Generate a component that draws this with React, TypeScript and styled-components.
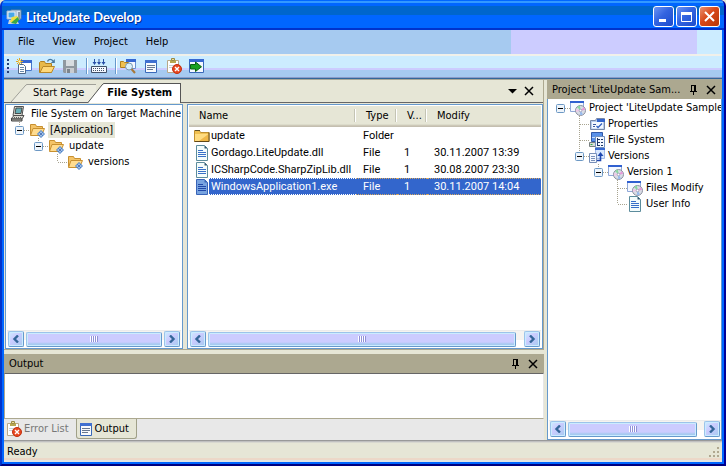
import React from "react";
import styled, { createGlobalStyle, css } from "styled-components";

const ui = `"DejaVu Sans Condensed", "Noto Sans", sans-serif`;
const listFont = `Roboto, "Liberation Sans", sans-serif`;
const beige = "#e6e6d6";
const khaki = "#aca890";
const sky = "#a6caf0";
const pale = "#ccecff";
const lilac = "#ccccff";

const GlobalStyle = createGlobalStyle`
  * { box-sizing: border-box; }
  body { margin: 0; background: ${beige}; color: #000; font: 11px/16px ${ui}; }
  button { font: inherit; color: inherit; background: none; border: 0; padding: 0; margin: 0; }
  svg { display: block; flex: none; }
`;

/* ---------- window frame ---------- */

const Frame = styled.div`
  display: flex;
  flex-direction: column;
  height: 100vh;
  background: #06f;
  border: solid;
  border-width: 0 2px 2px;
  border-color: #0033cc #000099 #000080 #0033cc;
  border-radius: 6px 6px 0 0;
  overflow: hidden;
`;

const TitleBar = styled.header`
  display: flex;
  align-items: center;
  flex: none;
  height: 30px;
  padding: 3px 4px 0 4px;
  gap: 4px;
  background: linear-gradient(
    #06f 0 1px, #39f 1px 3px, #06f 3px 6px, #06c 6px 15px, #06f 15px 28px, #03c 28px 30px
  );
`;

const WindowTitle = styled.h1`
  flex: 1;
  margin: 0;
  color: #fff;
  font: bold 13px/20px Lato, "Open Sans", sans-serif;
  text-shadow: 1px 1px 0 #003090;
`;

const CaptionButtons = styled.div`
  display: flex;
  gap: 2px;
`;

const CaptionButton = styled.button<{ $danger?: boolean }>`
  display: grid;
  place-items: center;
  width: 21px;
  height: 21px;
  border: 1px solid #fff;
  border-radius: 3px;
  background: ${(p) =>
    p.$danger
      ? "linear-gradient(135deg, #e89070, #d84818 45%, #b83808)"
      : "linear-gradient(135deg, #6c94f4, #3364e0 45%, #1c4ccc)"};
`;

const Client = styled.div`
  display: flex;
  flex-direction: column;
  flex: 1;
  min-height: 0;
  margin: 0 2px 2px;
  background: ${beige};
`;

/* ---------- menu and toolbar ---------- */

const MenuBar = styled.nav`
  display: flex;
  align-items: center;
  flex: none;
  height: 24px;
  padding-left: 14px;
  gap: 18px;
  background: linear-gradient(
    to left, ${pale} 0 25px, ${lilac} 25px 211px, ${sky} 211px
  );
`;

const ToolBar = styled.div`
  display: flex;
  align-items: center;
  flex: none;
  height: 26px;
  padding: 0 3px 2px;
  gap: 7px;
  background: linear-gradient(
    #f0f0ea 0 2px, ${pale} 2px 14px, ${lilac} 14px 16px, ${sky} 16px 23px,
    #8c9cc8 23px 24px, #336699 24px 25px, #a8a898 25px
  );
`;

const ToolButton = styled.button`
  display: grid;
  place-items: center;
  width: 16px;
  height: 16px;
`;

const Grip = styled.span`
  width: 2px;
  height: 14px;
  background: repeating-linear-gradient(#223c78 0 2px, transparent 2px 4px);
`;

const Separator = styled.span`
  width: 2px;
  height: 16px;
  margin-left: 1px;
  margin-right: -4px;
  border-left: 1px solid #6699cc;
  border-right: 1px solid #fff;
`;

/* ---------- docking layout ---------- */

const Workspace = styled.main`
  display: grid;
  grid-template-columns: minmax(0, 1fr) 175px;
  column-gap: 3px;
  flex: 1;
  min-height: 0;
`;

const LeftColumn = styled.div`
  display: flex;
  flex-direction: column;
  min-height: 0;
`;

const DocumentWell = styled.section`
  display: flex;
  flex-direction: column;
  flex: 1;
  min-height: 0;
  border-right: 1px solid ${khaki};
  border-bottom: 1px solid ${khaki};
`;

const TabBar = styled.div`
  display: flex;
  align-items: flex-end;
  flex: none;
  height: 23px;
  padding: 0 9px 0 7px;
  border-bottom: 1px solid #666;
`;

const TabActions = styled.div`
  display: flex;
  align-items: center;
  align-self: center;
  gap: 7px;
  margin-left: auto;
`;

const DocTab = styled.button<{ $active?: boolean }>`
  display: flex;
  position: relative;
  height: ${(p) => (p.$active ? 20 : 18)}px;
  margin-bottom: ${(p) => (p.$active ? -1 : 0)}px;
  margin-left: ${(p) => (p.$active ? -8 : 0)}px;
  font-weight: ${(p) => (p.$active ? "bold" : "normal")};
`;

const DocTabLabel = styled.span<{ $active?: boolean }>`
  height: 100%;
  padding: ${(p) => (p.$active ? "1px 8px 0 3px" : "0 12px 0 6px")};
  background: ${(p) => (p.$active ? "#fff" : "#ecece0")};
  border-top: 1px solid ${(p) => (p.$active ? "#555" : "#a0a098")};
  border-right: ${(p) => (p.$active ? "1px solid #555" : "0")};
`;

const Panes = styled.div`
  display: flex;
  flex: 1;
  min-height: 0;
  gap: 4px;
  padding: 1px 0 0 1px;
`;

const Pane = styled.div<{ $fixed?: boolean }>`
  display: flex;
  flex-direction: column;
  flex: ${(p) => (p.$fixed ? "0 0 178px" : "1")};
  min-width: 0;
  padding: 1px 1px 0;
  background: #fff;
  border: 1px solid #6699cc;
`;

const Scroller = styled.div`
  flex: 1;
  min-height: 0;
  overflow: hidden;
`;

/* ---------- tree ---------- */

const TreeList = styled.ul<{ $inset: number }>`
  margin: 0;
  padding: 0 0 0 ${(p) => p.$inset}px;
  list-style: none;
`;

const TreeRow = styled.li`
  display: flex;
  height: 16px;
  white-space: nowrap;
`;

const GuideCell = styled.span`
  display: block;
  flex: none;
  width: 19px;
  height: 16px;
`;

const TreeLabel = styled.span<{ $selected?: boolean; $gap: number }>`
  margin-left: ${(p) => p.$gap}px;
  padding-left: 2px;
  padding-right: ${(p) => (p.$selected ? 2 : 0)}px;
  line-height: 16px;
  background: ${(p) => (p.$selected ? beige : "transparent")};
`;

/* ---------- file list ---------- */

const FileTable = styled.table`
  width: 100%;
  table-layout: fixed;
  border-collapse: separate;
  border-spacing: 0;
  font: 11px/17px ${listFont};
`;

const Col = styled.col<{ $w?: number }>`
  width: ${(p) => (p.$w ? `${p.$w}px` : "auto")};
`;

const HeadCell = styled.th`
  height: 21px;
  padding: 0 0 2px 10px;
  font-weight: normal;
  font-family: ${ui};
  text-align: left;
  background:
    linear-gradient(#c4c4b4, #c4c4b4) right 1px top 3px / 1px 13px no-repeat,
    linear-gradient(#fff, #fff) right 0 top 3px / 1px 13px no-repeat,
    linear-gradient(${beige} 0 18px, #dcdccb 18px 19px, #cdc8b8 19px 20px, #c4bfb0 20px);
  &:last-child {
    background: linear-gradient(${beige} 0 18px, #dcdccb 18px 19px, #cdc8b8 19px 20px, #c4bfb0 20px);
  }
`;

const FileRow = styled.tr<{ $selected?: boolean }>`
  ${(p) =>
    p.$selected &&
    css`
      color: #fff;
      td { background: #3366cc; border-top: 1px dotted #d8a860; border-bottom: 1px dotted #d8a860; line-height: 15px; }
      td:first-child { background: linear-gradient(to right, #fff 20px, #3366cc 20px); border-color: #fff; }
    `}
`;

const FileCell = styled.td`
  height: 17px;
  padding: 0 0 0 7px;
  white-space: nowrap;
`;

const NameBox = styled.span`
  display: flex;
  align-items: center;
  gap: 1px;
  height: 15px;
  margin-left: -2px;
`;

/* ---------- scroll bar ---------- */

const ScrollTrack = styled.div`
  display: flex;
  align-items: center;
  flex: none;
  height: 18px;
  padding: 0 1px;
  gap: 2px;
  background: linear-gradient(#ececec 0 1px, #f6f4f0 1px 10px, #fff 10px);
`;

const bluish = css`
  border: 1px solid #9cc4ea;
  border-right-color: #6699cc;
  border-bottom-color: #6699cc;
  border-radius: 2px;
  box-shadow: inset 0 0 0 1px ${pale};
  background: linear-gradient(135deg, ${pale}, ${lilac} 40%, ${sky});
`;

const ScrollButton = styled.button`
  ${bluish}
  display: grid;
  place-items: center;
  width: 16px;
  height: 16px;
`;

const ScrollThumb = styled.div<{ $rest: number }>`
  ${bluish}
  display: grid;
  place-items: center;
  flex: 1;
  height: 15px;
  margin-right: ${(p) => p.$rest}px;
  background: linear-gradient(${lilac} 0 9px, ${sky} 11px);
`;

const ThumbRidges = styled.span`
  width: 8px;
  height: 6px;
  background: repeating-linear-gradient(to right, #fff 0 1px, #9090d8 1px 2px);
`;

/* ---------- tool windows ---------- */

const ToolHeader = styled.div`
  display: flex;
  align-items: center;
  flex: none;
  height: 19px;
  padding: 0 6px 0 5px;
  gap: 8px;
  background: ${khaki};
`;

const ToolTitle = styled.h2`
  flex: 1;
  margin: 0;
  font: 11px/16px ${ui};
  white-space: nowrap;
`;

const OutputPanel = styled.section`
  display: flex;
  flex-direction: column;
  flex: none;
  margin-top: 4px;
`;

const OutputText = styled.textarea`
  display: block;
  width: 100%;
  height: 46px;
  margin: 0;
  border: 1px solid ${khaki};
  border-top-color: #666;
  border-right-color: #e6e6e6;
  resize: none;
  background: #fff;
  outline: 0;
`;

const OutputTabs = styled.div`
  display: flex;
  align-items: flex-start;
  height: 21px;
  background: #e8e8e8;
`;

const OutputTab = styled.button<{ $active?: boolean }>`
  display: flex;
  align-items: center;
  gap: 2px;
  height: 20px;
  padding: 0 7px 0 2px;
  color: ${(p) => (p.$active ? "#000" : "#777")};
  ${(p) =>
    p.$active
      ? css`
          background: ${beige};
          border: solid #a0a088;
          border-width: 0 1px 1px;
          border-radius: 0 0 3px 3px;
        `
      : ""}
`;

const ProjectPanel = styled.aside`
  display: flex;
  flex-direction: column;
  min-height: 0;
  background: #fff;
`;

const ProjectBody = styled.div`
  display: flex;
  flex-direction: column;
  flex: 1;
  min-height: 0;
  padding: 1px 0 1px 1px;
  border: 1px solid #6699cc;
  border-top: 0;
`;

const StatusBar = styled.footer`
  display: flex;
  align-items: center;
  justify-content: space-between;
  flex: none;
  height: 22px;
  padding: 2px 2px 0 3px;
  background: linear-gradient(
    #999 0 1px, #c0c0c0 1px 2px, #d8d8d0 2px 3px, ${beige} 3px 18px, #ecd8c8 18px 20px, #e4e4e4 20px
  );
`;

/* ---------- icons ---------- */

const Icon = ({ children, w = 16, h = 16 }: { children: React.ReactNode; w?: number; h?: number }) => (
  <svg width={w} height={h} viewBox={`0 0 ${w} ${h}`} aria-hidden="true">
    {children}
  </svg>
);

const AppIcon = () => (
  <Icon>
    <path d="M5 1h10v9H5z" fill="#d8e4f0" stroke="#5880a8" />
    <path d="M1 2h9v8H1z" fill="#eef4fa" stroke="#9cb4cc" />
    <path d="M2.500 3.500h6v5h-6z" fill="#48a8e8" />
    <path d="M12 3h2v8h-2z" fill="#8898a8" />
    <path d="M3 11h8l2 4H2z" fill="#c8d4e0" />
    <path d="M6 8l5-1 2 2-3 5-6-1z" fill="#f0e040" />
    <path d="M7 12l5-4 1 3-3 4-5-1z" fill="#38a848" />
  </Icon>
);

const NewProjectIcon = () => (
  <Icon>
    <path d="M5.500 2.500h10v10h-10z" fill="#fff" stroke="#4878c8" />
    <path d="M5 2h11v3H5z" fill="#3868d0" />
    <path d="M2.500 6.500h5l2 2v7h-7z" fill="#fff" stroke="#506888" />
    <path d="M4 9.500h4M4 11.500h4M4 13.500h4" stroke="#6888a8" />
    <path d="M3.500 0v7M0 3.500h7M1 1l5 5M6 1L1 6" stroke="#e0a820" />
    <path d="M2.500 2.500h2v2h-2z" fill="#fff8c0" />
  </Icon>
);

const OpenIcon = () => (
  <Icon>
    <path d="M.5 14.500V4.500l1-1h4l1 2h6v9z" fill="#e8b848" stroke="#b08020" />
    <path d="M1 14.500L4 8.500h11.500l-3 6z" fill="#ffd878" stroke="#b88828" />
    <path d="M8.500 3.500c1-3 4-2.500 5.500-.5" fill="none" stroke="#4878a0" strokeWidth="1.400" />
    <path d="M15.800 1v4h-4z" fill="#4878a0" />
  </Icon>
);

const SaveIcon = () => (
  <Icon>
    <path d="M1 2h14v13H2l-1-1z" fill="#9098a0" />
    <path d="M4 2h8v6H4z" fill="#d8dce0" />
    <path d="M4 10h8v5H4z" fill="#c8ccd0" />
    <path d="M5 11h3v4H5z" fill="#7c848c" />
  </Icon>
);

const GridIcon = () => (
  <Icon>
    <path d="M3.500 1v5M8 1v5M12.500 1v5" stroke="#2850a8" />
    <path d="M1.500 4h4l-2 3zM6 4h4L8 7zM10.500 4h4l-2 3z" fill="#2850a8" />
    <path d="M.5 8.500h15v6H.5z" fill="#f4f8ff" stroke="#405068" />
    <path d="M2 10.500h12M2 12.500h12" stroke="#405068" strokeDasharray="1 1" />
  </Icon>
);

const FindIcon = () => (
  <Icon>
    <path d="M6.500 1.500h9v9h-9z" fill="#f4f8ff" stroke="#6890d0" />
    <path d="M6 1h10v3H6z" fill="#3868d0" />
    <path d="M.5 3.500h3l1 1h4v5h-8z" fill="#f0c050" stroke="#b08020" />
    <circle cx="9" cy="8.500" r="3.500" fill="#d8f0fc" stroke="#7898b0" />
    <path d="M11.500 11l3.500 4" stroke="#a87838" strokeWidth="2" />
  </Icon>
);

const ListIcon = () => (
  <Icon w={14}>
    <path d="M1.500 2.500h11v12h-11z" fill="#f8fafc" stroke="#3868b8" />
    <path d="M1 2h12v3H1z" fill="#4070d0" />
    <path d="M3 7.500h8M3 9.500h8M3 11.500h6" stroke="#687890" />
  </Icon>
);

const ClipboardIcon = () => (
  <Icon>
    <path d="M1.500 2.500h11v12h-11z" fill="#fff" stroke="#b8a888" />
    <path d="M4 2h6v3H4z" fill="#b8a850" />
    <path d="M5.500.5h3v2h-3z" fill="#f0e090" stroke="#988848" />
    <path d="M3 7.500h7M3 9.500h4" stroke="#c8d0d8" />
    <circle cx="11" cy="11" r="4.500" fill="#e84820" stroke="#c03010" />
    <path d="M9 9l4 4M13 9l-4 4" stroke="#fff" strokeWidth="1.400" />
  </Icon>
);

const RunIcon = () => (
  <Icon>
    <path d="M.5 1.500h14v13H.5z" fill="#f4f8ff" stroke="#3868b8" />
    <path d="M0 1h15v3H0z" fill="#3868d0" />
    <path d="M1.500 6.500h5V4l6 4.800-6 4.700V11h-5z" fill="#18a020" stroke="#086010" />
  </Icon>
);

const ComputerIcon = () => (
  <Icon>
    <path d="M4.500.5h9l-1.500 9H3z" fill="#e0e0d8" stroke="#505050" />
    <path d="M6 2h6l-1 5.500H5z" fill="#68b0b8" stroke="#303030" strokeWidth=".8" />
    <path d="M1 13l3-3.500h10L12 13z" fill="#d8d8d0" stroke="#505050" />
    <path d="M1.500 13h10.500v2H1.500z" fill="#b0b0a8" stroke="#404040" />
    <path d="M4 11.500h7" stroke="#606060" strokeDasharray="1 1" />
  </Icon>
);

const FolderIcon = () => (
  <Icon>
    <path d="M.5 13.500V2.500h5l1 2h8.500v9z" fill="#f0c050" stroke="#c09030" />
    <path d="M1 6h13.500v7H1z" fill="#ffdc80" />
    <path d="M5 13l9.500-7v7z" fill="#f0b848" />
    <path d="M.5 13.500h14.500V4.500" fill="none" stroke="#604818" />
    <path d="M1 2.500h5" stroke="#605028" />
  </Icon>
);

const LinkedFolderIcon = () => (
  <Icon>
    <path d="M1.500 12.500V2.500h5l1 2h6v8z" fill="#f4c468" stroke="#c89030" />
    <path d="M1.500 13.500L4 6.500h11.500l-3 7z" fill="#ffdc90" stroke="#c89030" />
    <path d="M12 8l4 4-4 4-4-4z" fill="#4880c8" />
    <path d="M12 9.500v5M9.500 12h5" stroke="#fff" />
    <circle cx="12" cy="12" r="1" fill="#2858a8" />
  </Icon>
);

const FileIcon = ({ selected }: { selected?: boolean }) => (
  <Icon>
    <path
      d="M2.500.5h8l3 3v12h-11z"
      fill={selected ? "#78a4e0" : "#f4fcfc"}
      stroke={selected ? "#3864b8" : "#5c8c9c"}
    />
    <path d="M10.500.5v3h3z" fill={selected ? "#3864b8" : "#305870"} />
    <path d="M4 5.500h5M4 7.500h8M4 9.500h8M4 11.500h8" stroke={selected ? "#2048a8" : "#3870c8"} />
  </Icon>
);

const DiscIcon = () => (
  <Icon>
    <path d="M.5 1.500h13v10H.5z" fill="#f4f8ff" stroke="#90a8d8" />
    <path d="M0 1h14v2H0z" fill="#3060d0" />
    <circle cx="10.500" cy="10.500" r="5" fill="#d8dce4" stroke="#8c90a0" />
    <path d="M10.500 10.500L7 7l3-1.500z" fill="#88d8a0" />
    <path d="M10.500 10.500L14 7l1 3z" fill="#e898d8" />
    <path d="M10.500 10.500L13 14.500l-3 .5z" fill="#90b8f0" />
    <path d="M10.500 10.500L6 12l0-3z" fill="#f0c8e8" />
    <circle cx="10.500" cy="10.500" r="1.300" fill="#fff" stroke="#8080a0" strokeWidth=".6" />
  </Icon>
);

const PropertiesIcon = () => (
  <Icon>
    <path d="M1.500 13.500v-9h5l1-2h8v11z" fill="#b8ccec" stroke="#7888a8" />
    <path d="M3 6h11v6.500H3z" fill="#f4f8ff" />
    <path d="M8 3h8v3H8z" fill="#3464cc" />
    <path d="M4 8.500h3M4 10.500h2" stroke="#3858a0" />
    <path d="M7.500 10l1.500 1.500L13 7.500" fill="none" stroke="#3060c0" strokeWidth="1.300" />
  </Icon>
);

const FileSystemIcon = () => (
  <Icon>
    <path d="M2.500.5h11v9h-11z" fill="#5890e8" stroke="#3058a8" />
    <path d="M3 5h10v1H3z" fill="#c8dcf8" />
    <path d="M.5 10.500h6v4h-6z" fill="#d8dcd8" stroke="#788080" />
    <path d="M1.500 12.500h2" stroke="#38a848" />
    <path d="M6.500 4.500h9v11h-9z" fill="#f4f8ff" stroke="#7090c0" />
    <path d="M8.500 6v8M9 7.500h2M9 10.500h2M9 13.500h2M12 7.500h2M12 10.500h2M12 13.500h2" stroke="#203868" />
  </Icon>
);

const VersionsIcon = () => (
  <Icon>
    <path d="M6.500.5h9v10h-9z" fill="#d8e8ff" stroke="#a0b8e8" />
    <path d="M6 0h10v2H6z" fill="#3868d0" />
    <path d="M.5 5.500h7v9h-7z" fill="#f4f8ff" stroke="#7890b8" />
    <path d="M2 8.500h4M2 10.500h4M2 12.500h4" stroke="#7890b8" />
    <path d="M8 12.500h3.500V7" fill="none" stroke="#2048b0" strokeWidth="1.600" />
    <path d="M8.500 8l3-4 3 4z" fill="#2048b0" />
  </Icon>
);

const PinIcon = () => (
  <Icon w={9} h={11}>
    <path d="M2.500 1v6M5.500 1v6M6.500 1v6M2 1.500h5M1 7.500h7M4.500 8v3" stroke="#000" fill="none" />
  </Icon>
);

const CloseIcon = () => (
  <Icon w={10} h={10}>
    <path d="M1 1l8 8M9 1l-8 8" stroke="#000" strokeWidth="1.500" />
  </Icon>
);

const DropIcon = () => (
  <Icon w={9} h={8}>
    <path d="M0 2h9L4.500 6.500z" />
  </Icon>
);

const ArrowIcon = ({ left }: { left?: boolean }) => (
  <Icon w={8} h={8}>
    <path d={left ? "M6 0.500L2.500 4L6 7.500" : "M2 0.500L5.500 4L2 7.500"} fill="none" stroke="#336699" strokeWidth="2.400" />
  </Icon>
);

const SizeGrip = () => (
  <Icon w={12} h={12}>
    <path
      d="M9 1h2v2H9zM9 5h2v2H9zM5 5h2v2H5zM9 9h2v2H9zM5 9h2v2H5zM1 9h2v2H1z"
      fill="#b0a890"
    />
  </Icon>
);

/* ---------- pieces ---------- */

type Guide = " " | "L" | "+" | "T" | "-";

const guideLines: Record<Guide, string> = {
  " ": "",
  L: "M9.500 0v8M10 8.500h9",
  T: "M9.500 0v16M10 8.500h9",
  "+": "M9.500 0v4M14 8.500h5",
  "-": "M14 8.500h5",
};

const GuideView = ({ kind }: { kind: Guide }) => {
  const drawing = (
    <Icon w={19}>
      <path d={guideLines[kind]} fill="none" stroke="#a8a490" strokeDasharray="1 1" />
      {(kind === "+" || kind === "-") && (
        <>
          <rect x="5.500" y="4.500" width="8" height="8" rx="1" fill="#eef4fa" stroke="#6c98c4" />
          <path d="M7 8.500h5" stroke="#000" />
        </>
      )}
    </Icon>
  );
  return kind === "+" || kind === "-" ? (
    <GuideCell as="button" aria-label="Collapse" aria-expanded="true">
      {drawing}
    </GuideCell>
  ) : (
    <GuideCell>{drawing}</GuideCell>
  );
};

type Node = { guides: string; icon: React.ReactNode; text: string; selected?: boolean };

const Tree = ({ nodes, inset, gap }: { nodes: Node[]; inset: number; gap: number }) => (
  <TreeList $inset={inset}>
    {nodes.map((n) => (
      <TreeRow key={n.text}>
        {n.guides.split("").map((g, i) => (
          <GuideView key={i} kind={g as Guide} />
        ))}
        {n.icon}
        <TreeLabel $selected={n.selected} $gap={gap}>
          {n.text}
        </TreeLabel>
      </TreeRow>
    ))}
  </TreeList>
);

const ScrollBar = ({ rest }: { rest: number }) => (
  <ScrollTrack>
    <ScrollButton aria-label="Scroll left">
      <ArrowIcon left />
    </ScrollButton>
    <ScrollThumb $rest={rest}>
      <ThumbRidges />
    </ScrollThumb>
    <ScrollButton aria-label="Scroll right">
      <ArrowIcon />
    </ScrollButton>
  </ScrollTrack>
);

const TabSlope = ({ active }: { active?: boolean }) => (
  <svg width="16" height={active ? 20 : 18} viewBox={`0 0 16 ${active ? 20 : 18}`} aria-hidden="true">
    {active ? (
      <path d="M0 20L14 2q1-1.500 2-1.500V20z" fill="#fff" />
    ) : (
      <path d="M0 18L14 2q1-1.500 2-1.500V18z" fill="#ecece0" />
    )}
    <path
      d={active ? "M0 19.500L14 2q1-1.500 2-1.500" : "M0 18L14 2q1-1.500 2-1.500"}
      fill="none"
      stroke={active ? "#555" : "#a0a098"}
    />
  </svg>
);

const machineNodes: Node[] = [
  { guides: "", icon: <ComputerIcon />, text: "File System on Target Machine" },
  { guides: "+", icon: <LinkedFolderIcon />, text: "[Application]", selected: true },
  { guides: " +", icon: <LinkedFolderIcon />, text: "update" },
  { guides: "  L", icon: <LinkedFolderIcon />, text: "versions" },
];

const projectNodes: Node[] = [
  { guides: "-", icon: <DiscIcon />, text: "Project 'LiteUpdate Sample" },
  { guides: " T", icon: <PropertiesIcon />, text: "Properties" },
  { guides: " T", icon: <FileSystemIcon />, text: "File System" },
  { guides: " +", icon: <VersionsIcon />, text: "Versions" },
  { guides: "  +", icon: <DiscIcon />, text: "Version 1" },
  { guides: "   T", icon: <DiscIcon />, text: "Files Modify" },
  { guides: "   L", icon: <FileIcon />, text: "User Info" },
];

const files = [
  { name: "update", type: "Folder", version: "", modified: "" },
  { name: "Gordago.LiteUpdate.dll", type: "File", version: "1", modified: "30.11.2007 13:39" },
  { name: "ICSharpCode.SharpZipLib.dll", type: "File", version: "1", modified: "30.08.2007 23:30" },
  { name: "WindowsApplication1.exe", type: "File", version: "1", modified: "30.11.2007 14:04", selected: true },
];

export default function App() {
  return (
    <>
      <GlobalStyle />
      <Frame>
        <TitleBar>
          <AppIcon />
          <WindowTitle>LiteUpdate Develop</WindowTitle>
          <CaptionButtons>
            <CaptionButton aria-label="Minimize">
              <Icon w={15} h={15}>
                <path d="M3 10h7v3H3z" fill="#fff" />
              </Icon>
            </CaptionButton>
            <CaptionButton aria-label="Maximize">
              <Icon w={15} h={15}>
                <path d="M2.500 3.500h10v9h-10z" fill="none" stroke="#fff" />
                <path d="M2 3h11v3H2z" fill="#fff" />
              </Icon>
            </CaptionButton>
            <CaptionButton $danger aria-label="Close">
              <Icon w={15} h={15}>
                <path d="M3 3l9 9M12 3l-9 9" stroke="#fff" strokeWidth="2" />
              </Icon>
            </CaptionButton>
          </CaptionButtons>
        </TitleBar>
        <Client>
          <MenuBar>
            <button>File</button>
            <button>View</button>
            <button>Project</button>
            <button>Help</button>
          </MenuBar>
          <ToolBar role="toolbar">
            <Grip />
            <ToolButton aria-label="New project"><NewProjectIcon /></ToolButton>
            <ToolButton aria-label="Open"><OpenIcon /></ToolButton>
            <ToolButton aria-label="Save" disabled><SaveIcon /></ToolButton>
            <Separator />
            <ToolButton aria-label="Build"><GridIcon /></ToolButton>
            <Separator />
            <ToolButton aria-label="Find in files"><FindIcon /></ToolButton>
            <ToolButton aria-label="Output"><ListIcon /></ToolButton>
            <ToolButton aria-label="Error list"><ClipboardIcon /></ToolButton>
            <ToolButton aria-label="Run"><RunIcon /></ToolButton>
          </ToolBar>
          <Workspace>
            <LeftColumn>
              <DocumentWell>
                <TabBar>
                  <DocTab>
                    <TabSlope />
                    <DocTabLabel>Start Page</DocTabLabel>
                  </DocTab>
                  <DocTab $active>
                    <TabSlope active />
                    <DocTabLabel $active>File System</DocTabLabel>
                  </DocTab>
                  <TabActions>
                    <button aria-label="Active files"><DropIcon /></button>
                    <button aria-label="Close document"><CloseIcon /></button>
                  </TabActions>
                </TabBar>
                <Panes>
                  <Pane $fixed>
                    <Scroller>
                      <Tree nodes={machineNodes} inset={3} gap={3} />
                    </Scroller>
                    <ScrollBar rest={0} />
                  </Pane>
                  <Pane>
                    <Scroller>
                      <FileTable>
                        <colgroup>
                          <Col $w={167} />
                          <Col $w={41} />
                          <Col $w={30} />
                          <Col />
                        </colgroup>
                        <thead>
                          <tr>
                            <HeadCell>Name</HeadCell>
                            <HeadCell>Type</HeadCell>
                            <HeadCell>V...</HeadCell>
                            <HeadCell>Modify</HeadCell>
                          </tr>
                        </thead>
                        <tbody>
                          {files.map((f) => (
                            <FileRow key={f.name} $selected={f.selected}>
                              <FileCell>
                                <NameBox>
                                  {f.type === "Folder" ? <FolderIcon /> : <FileIcon selected={f.selected} />}
                                  {f.name}
                                </NameBox>
                              </FileCell>
                              <FileCell>{f.type}</FileCell>
                              <FileCell>{f.version}</FileCell>
                              <FileCell>{f.modified}</FileCell>
                            </FileRow>
                          ))}
                        </tbody>
                      </FileTable>
                    </Scroller>
                    <ScrollBar rest={6} />
                  </Pane>
                </Panes>
              </DocumentWell>
              <OutputPanel>
                <ToolHeader>
                  <ToolTitle>Output</ToolTitle>
                  <button aria-label="Auto hide"><PinIcon /></button>
                  <button aria-label="Close output"><CloseIcon /></button>
                </ToolHeader>
                <OutputText aria-label="Output" readOnly />
                <OutputTabs>
                  <OutputTab>
                    <ClipboardIcon />
                    Error List
                  </OutputTab>
                  <OutputTab $active>
                    <ListIcon />
                    Output
                  </OutputTab>
                </OutputTabs>
              </OutputPanel>
            </LeftColumn>
            <ProjectPanel>
              <ToolHeader>
                <ToolTitle>Project 'LiteUpdate Sam...</ToolTitle>
                <button aria-label="Auto hide"><PinIcon /></button>
                <button aria-label="Close project"><CloseIcon /></button>
              </ToolHeader>
              <ProjectBody>
                <Scroller>
                  <Tree nodes={projectNodes} inset={2} gap={1} />
                </Scroller>
                <ScrollBar rest={5} />
              </ProjectBody>
            </ProjectPanel>
          </Workspace>
          <StatusBar>
            Ready
            <SizeGrip />
          </StatusBar>
        </Client>
      </Frame>
    </>
  );
}
